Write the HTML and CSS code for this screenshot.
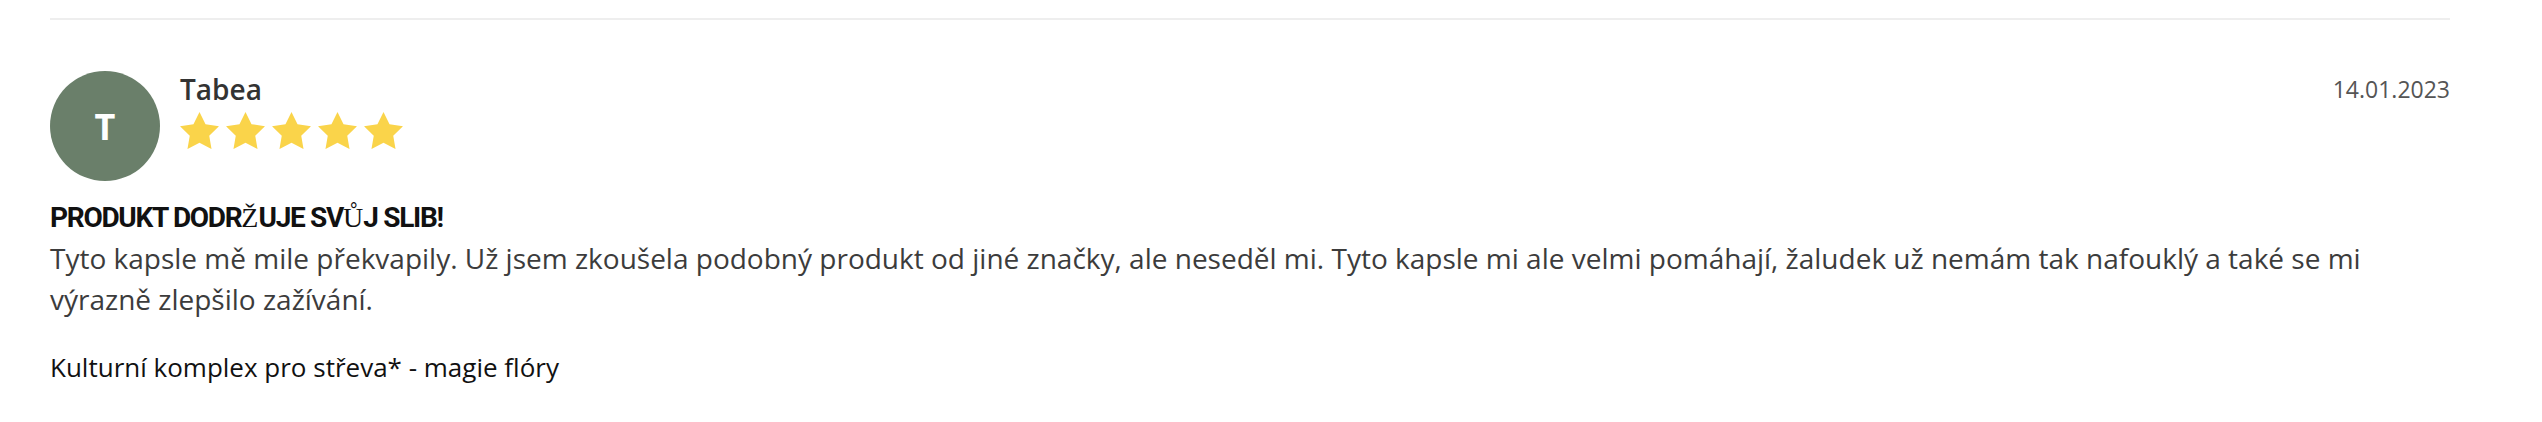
FILE: index.html
```html
<!DOCTYPE html>
<html>
<head>
    <meta name="viewport" content="width=device-width, initial-scale=1.0">
    <link rel="stylesheet" href="styles.css">
</head>
<body>
    <div class="reviews">
        <div class="review">
            <div class="review-head">
                <div class="avatar">T</div>
                <div class="author">
                    <div class="author-name">Tabea</div>
                    <div class="stars">
                        <svg class="star" viewBox="2 2 20 19"><path d="M12 2l3.09 6.26L22 9.27l-5 4.87 1.18 6.88L12 17.77l-6.18 3.25L7 14.14 2 9.27l6.91-1.01L12 2z"/></svg>
                        <svg class="star" viewBox="2 2 20 19"><path d="M12 2l3.09 6.26L22 9.27l-5 4.87 1.18 6.88L12 17.77l-6.18 3.25L7 14.14 2 9.27l6.91-1.01L12 2z"/></svg>
                        <svg class="star" viewBox="2 2 20 19"><path d="M12 2l3.09 6.26L22 9.27l-5 4.87 1.18 6.88L12 17.77l-6.18 3.25L7 14.14 2 9.27l6.91-1.01L12 2z"/></svg>
                        <svg class="star" viewBox="2 2 20 19"><path d="M12 2l3.09 6.26L22 9.27l-5 4.87 1.18 6.88L12 17.77l-6.18 3.25L7 14.14 2 9.27l6.91-1.01L12 2z"/></svg>
                        <svg class="star" viewBox="2 2 20 19"><path d="M12 2l3.09 6.26L22 9.27l-5 4.87 1.18 6.88L12 17.77l-6.18 3.25L7 14.14 2 9.27l6.91-1.01L12 2z"/></svg>
                    </div>
                </div>
                <div class="review-date">14.01.2023</div>
            </div>

            <h3 class="review-title">PRODUKT DODR<span class="alt-glyph">Ž</span>UJE SV<span class="alt-glyph">Ů</span>J SLIB!</h3>
            <p class="review-text">Tyto kapsle mě mile překvapily. Už jsem zkoušela podobný produkt od jiné značky, ale neseděl mi. Tyto kapsle mi ale velmi pomáhají, žaludek už nemám tak nafouklý a také se mi výrazně zlepšilo zažívání.</p>
            <div class="review-product">Kulturní komplex pro střeva* - magie flóry</div>
        </div>
    </div>
</body>
</html>
```

FILE: styles.css
```css
* {
    box-sizing: border-box;
    margin: 0;
    padding: 0;
}

body {
    font-family: "Open Sans", Arial, sans-serif;
    background-color: #fff;
    color: #333;
    padding-top: 18px;
}

.reviews {
    width: 2400px;
    margin-left: 50px;
}

.review {
    border-top: 2px solid #eeeeee;
    padding-top: 51px;
}

.review-head {
    display: flex;
    align-items: flex-start;
    gap: 20px;
}

.avatar {
    width: 110px;
    height: 110px;
    border-radius: 50%;
    background-color: #6a7f6a;
    color: #fff;
    font-size: 36px;
    font-weight: 700;
    display: flex;
    align-items: center;
    justify-content: center;
    flex-shrink: 0;
}

.author {
    flex: 1;
}

.author-name {
    font-size: 28px;
    line-height: 36px;
    font-weight: 600;
    color: #333;
}

.stars {
    display: flex;
    gap: 7px;
    margin-top: 5px;
}

.star {
    width: 39px;
    height: 37px;
    fill: #fad44a;
}

.review-date {
    font-size: 23px;
    line-height: 36px;
    color: #555;
}

.review-title {
    font-family: Roboto, "DejaVu Sans", sans-serif;
    font-size: 28px;
    line-height: 34px;
    font-weight: 700;
    letter-spacing: -1.3px;
    color: #111;
    margin-top: 20px;
}

.alt-glyph {
    font-family: "Liberation Serif", serif;
    font-weight: 400;
    letter-spacing: 0;
}

.review-text {
    font-size: 28px;
    line-height: 41px;
    color: #3c3c3c;
    margin-top: 3px;
}

.review-product {
    font-size: 26px;
    line-height: 36px;
    color: #111;
    margin-top: 29px;
}
```
